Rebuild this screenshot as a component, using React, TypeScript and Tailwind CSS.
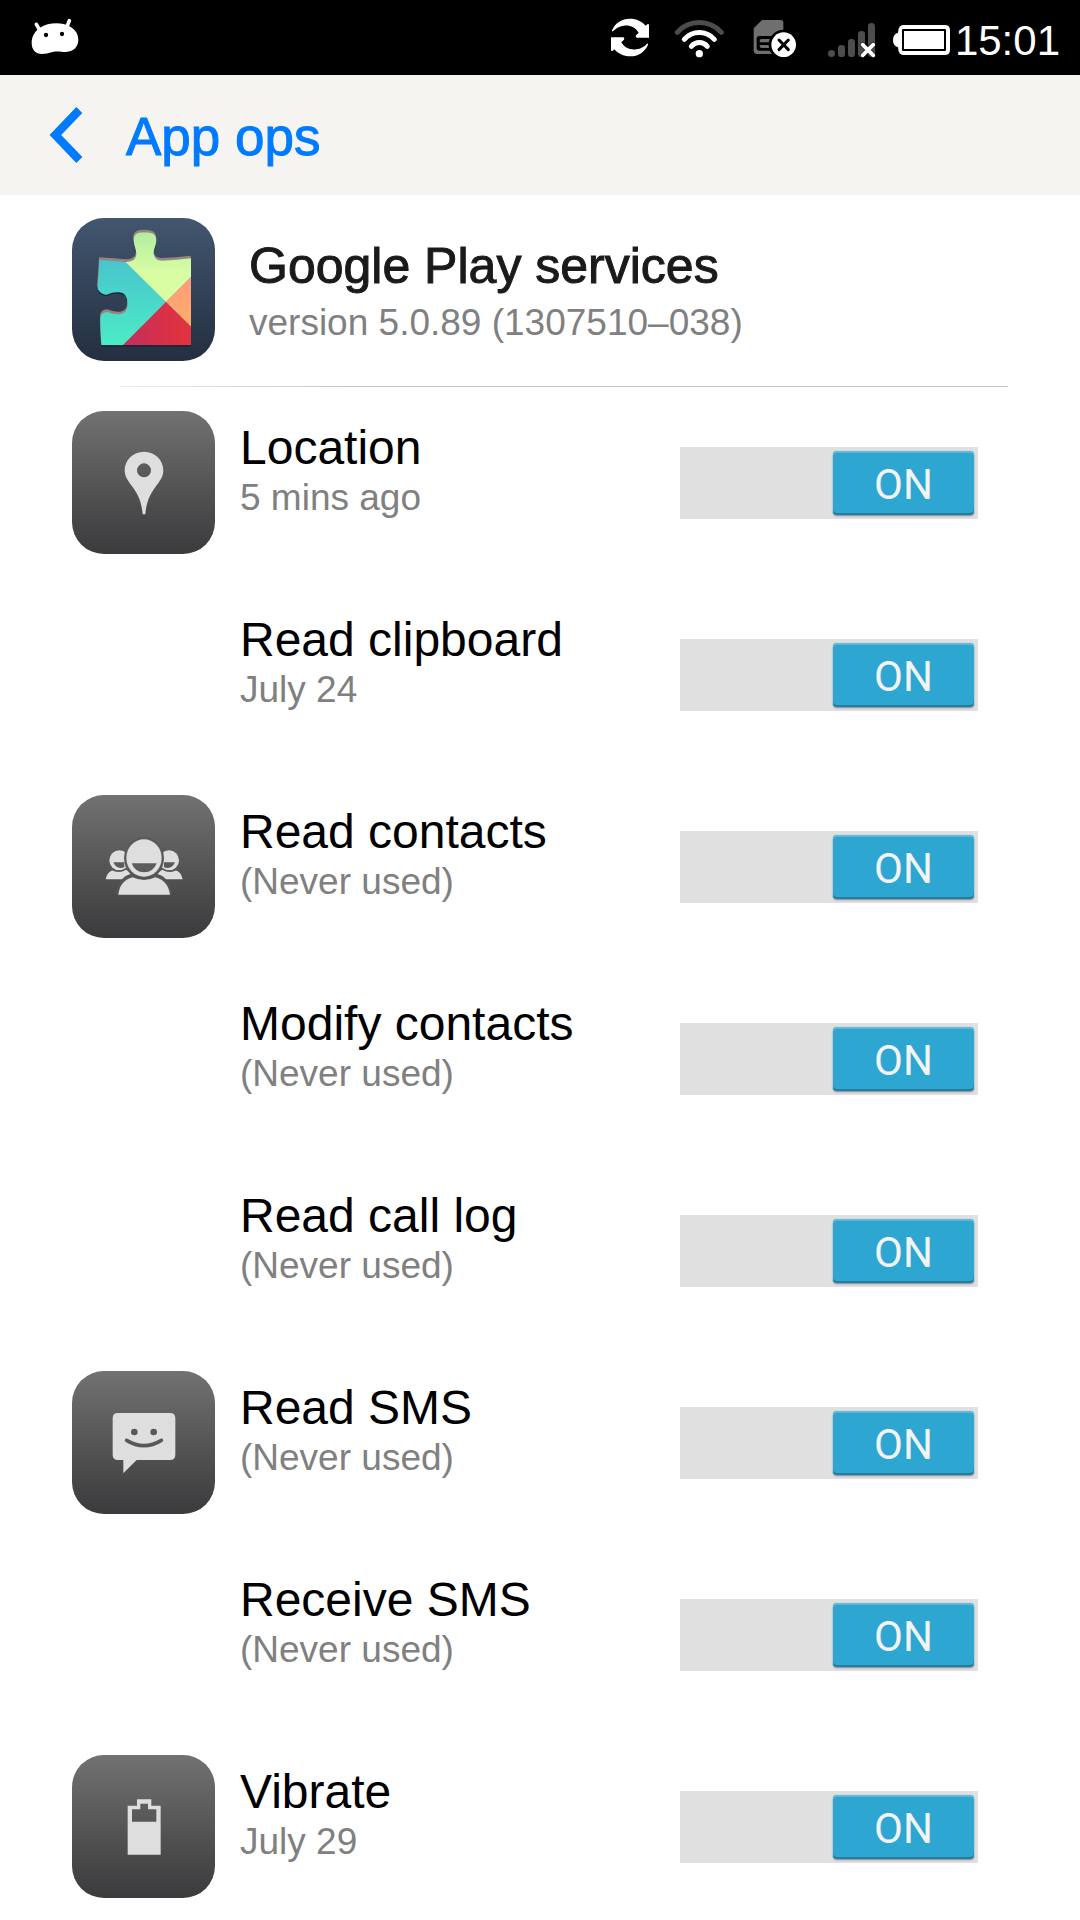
import { useState, type ReactNode } from "react";

function AndroidHead() {
  return (
    <svg viewBox="90 0 150 225" className="h-[75px] w-[50px]" aria-hidden="true">
      <g stroke="#fff" strokeWidth="11" strokeLinecap="round">
        <path d="M109 73 L118 88" />
        <path d="M208 62 L202 77" />
      </g>
      <path
        d="M95 128 C95 108 106 92 120 83 C145 66 188 66 208 79 C227 88 235 104 235 121 C234 143 219 155 198 156 C182 156 172 153 158 156 C145 160 136 162 126 162 C106 161 95 149 95 128 Z"
        fill="#fff"
      />
      <circle cx="138" cy="105" r="6.5" />
      <circle cx="186" cy="102" r="6.5" />
    </svg>
  );
}

function SyncIcon() {
  return (
    <svg viewBox="60 0 120 225" className="h-[75px] w-10" fill="#fff" aria-hidden="true">
      <path
        id="sync-arrow"
        d="M66 91 C76 68 96 56 119 56 C140 56 156 64 167 77 L173 72 Q177 71 177 76 L177 113 L140 113 Q135 110 138 106 L146 98 C136 81 118 74 101 77 C87 79 76 86 69 94 Q65 95 66 91 Z"
      />
      <use href="#sync-arrow" transform="rotate(180 120 112.5)" />
    </svg>
  );
}

function WifiIcon() {
  return (
    <svg viewBox="252 0 153 225" className="h-[75px] w-[51px]" fill="none" strokeWidth="15" strokeLinecap="round" aria-hidden="true">
      <path d="M262 97 C297 58 358 58 394 97" stroke="#4d4d4d" />
      <path d="M283 118 C307 91 348 91 373 118" stroke="#fff" />
      <path d="M304 139 C317 124 339 124 352 139" stroke="#fff" />
      <circle cx="328" cy="161" r="11" fill="#fff" />
    </svg>
  );
}

function SimIcon() {
  return (
    <svg viewBox="489 0 132 225" className="h-[75px] w-11" aria-hidden="true">
      <path d="M516 60 H572 Q580 60 580 68 V162 H502 Q491 162 491 151 V85 Z" fill="#6f6f6f" />
      <path d="M508 108 H560 V152 H508 Q500 152 500 144 V116 Q500 108 508 108 Z" fill="#000" />
      <path d="M515 117 H550 V127 H509 V123 Q509 117 515 117 Z M509 135 H550 V144 H515 Q509 144 509 138 Z" fill="#6f6f6f" />
      <circle cx="581" cy="134" r="45" fill="#000" />
      <circle cx="581" cy="134" r="37" fill="#fff" />
      <path d="M567 120 L595 149 M595 120 L567 149" stroke="#000" strokeWidth="9" strokeLinecap="round" />
    </svg>
  );
}

function SignalIcon() {
  return (
    <svg viewBox="51 0 147 225" className="h-[75px] w-[49px]" aria-hidden="true">
      <g fill="#4d4d4d">
        <rect x="54" y="150" width="21" height="21" rx="10.5" />
        <rect x="84" y="135" width="21" height="36" rx="10" />
        <rect x="114" y="117" width="21" height="54" rx="10" />
        <rect x="144" y="93" width="21" height="78" rx="10" />
        <path d="M174 79 Q174 69 184 69 Q195 69 195 79 V171 H184 Q174 171 174 160 Z" />
      </g>
      <path d="M158 134 L190 166 M190 134 L158 166" stroke="#000" strokeWidth="17" strokeLinecap="round" opacity="0.3" />
      <path d="M158 134 L190 166 M190 134 L158 166" stroke="#fff" strokeWidth="11" strokeLinecap="round" />
    </svg>
  );
}

function BatteryIcon() {
  return (
    <svg viewBox="246 0 177 225" className="h-[75px] w-[59px]" aria-hidden="true">
      <path
        d="M282 75 H404 Q420 75 420 91 V149 Q420 165 404 165 H282 Q267 165 265 149 L264 142 Q249 138 249 120 Q249 102 264 98 L265 91 Q267 75 282 75 Z"
        fill="#fff"
      />
      <rect x="276" y="87" width="132" height="66" rx="3" fill="#000" />
      <rect x="282" y="93" width="120" height="54" fill="#fff" />
    </svg>
  );
}

function PlayServicesIcon() {
  return (
    <svg viewBox="36 39 429 429" className="size-[143px] shrink-0" role="img" aria-label="Google Play services">
      <defs>
        <linearGradient id="tile-navy" x1="0" y1="0" x2="0" y2="1">
          <stop offset="0" stopColor="#42566f" />
          <stop offset="1" stopColor="#242f40" />
        </linearGradient>
        <linearGradient id="teal" x1="0" y1="0" x2="0" y2="1">
          <stop offset="0" stopColor="#48c4cc" />
          <stop offset="1" stopColor="#4cecc6" />
        </linearGradient>
        <linearGradient id="lime" x1="0" y1="0" x2="0" y2="1">
          <stop offset="0" stopColor="#aeeba2" />
          <stop offset="0.6" stopColor="#d9fda3" />
        </linearGradient>
        <linearGradient id="peach" x1="0" y1="0" x2="0" y2="1">
          <stop offset="0" stopColor="#ff9a7e" />
          <stop offset="1" stopColor="#ffae68" />
        </linearGradient>
        <linearGradient id="crimson" x1="0" y1="0" x2="1" y2="0">
          <stop offset="0" stopColor="#c02e60" />
          <stop offset="0.7" stopColor="#dc3144" />
          <stop offset="1" stopColor="#e2353b" />
        </linearGradient>
        <path
          id="puzzle"
          d="M118 165 Q165 168 198 171 Q229 170 229 148 C229 132 221 122 221 104 C221 86 234 82 254 82 C278 82 289 88 289 106 C289 122 281 130 281 146 Q283 166 306 167 Q350 166 393 160 V421 H124 Q121 370 121 340 Q123 321 143 321 Q160 329 180 328 Q203 325 203 298 Q203 263 177 262 Q160 260 140 269 Q126 271 113 253 Q112 240 115 220 Z"
        />
        <clipPath id="puzzle-clip">
          <use href="#puzzle" />
        </clipPath>
      </defs>
      <rect x="36" y="39" width="429" height="429" rx="96" fill="url(#tile-navy)" />
      <use href="#puzzle" fill="#1b2433" transform="translate(0 4)" />
      <use href="#puzzle" fill="#96857f" transform="translate(-1 -8)" />
      <g clipPath="url(#puzzle-clip)">
        <path d="M100 160 H190 L318 291 L186 425 H100 Z" fill="url(#teal)" />
        <path d="M184 158 L200 70 H400 V209 L318 291 Z" fill="url(#lime)" />
        <path d="M318 291 L400 209 V372 Z" fill="url(#peach)" />
        <path d="M318 291 L400 372 V425 H184 Z" fill="url(#crimson)" />
      </g>
    </svg>
  );
}

function Tile({ top, children }: { top: number; children: ReactNode }) {
  return (
    <svg
      viewBox={`36 ${top} 429 429`}
      className="size-[143px] rounded-[32px] bg-linear-to-b from-[#727272] to-[#3b3b3d]"
      fill="#dedede"
      aria-hidden="true"
    >
      {children}
    </svg>
  );
}

function LocationTile() {
  return (
    <Tile top={33}>
      <path
        fillRule="evenodd"
        d="M252 155 C285 155 310 180 310 211 C310 233 297 246 284 264 C266 289 259 312 256 343 H248 C245 312 238 289 220 264 C207 246 194 233 194 211 C194 180 219 155 252 155 Z M252 190 A21 21 0 1 0 252 232 A21 21 0 1 0 252 190 Z"
      />
    </Tile>
  );
}

function ContactsTile() {
  return (
    <Tile top={45}>
      <g id="side-person">
        <circle cx="178" cy="241" r="30" />
        <path d="M137 298 Q141 276 160 270 Q178 282 197 268 L215 282 Q203 289 197 298 Z" />
        <path d="M160 247 H193 V262 Q170 270 160 247 Z" fill="#5a5a5b" />
        <path d="M155 268 Q178 280 200 266" fill="none" stroke="#5a5a5b" strokeWidth="4" />
      </g>
      <use href="#side-person" transform="translate(505 0) scale(-1 1)" />
      <ellipse cx="252" cy="235" rx="60" ry="64" fill="#5a5a5b" />
      <path d="M168 344 Q176 290 212 282 H292 Q328 290 336 344 Z" fill="#555556" />
      <path d="M175 344 Q180 302 218 292 Q252 308 286 292 Q324 302 330 344 Z" />
      <ellipse cx="252" cy="234" rx="53" ry="56" />
      <path d="M215 250 H290 Q280 277 252 277 Q225 277 215 250 Z" fill="#5c5c5d" />
    </Tile>
  );
}

function MessageTile() {
  return (
    <Tile top={33}>
      <path d="M174 159 H330 Q346 159 346 175 V284 Q346 300 330 300 H230 L190 340 V300 H174 Q158 300 158 284 V175 Q158 159 174 159 Z" />
      <circle cx="223" cy="216" r="10" fill="#58585a" />
      <circle cx="281" cy="216" r="10" fill="#58585a" />
      <path d="M200 241 Q252 273 304 241" fill="none" stroke="#58585a" strokeWidth="11" strokeLinecap="round" />
    </Tile>
  );
}

function VibrateTile() {
  return (
    <Tile top={30}>
      <path fillRule="evenodd" d="M231 163 H274 V182 H302 V329 H203 V182 H231 Z M241 176 V193 H216 V230 H289 V193 H264 V176 Z" />
    </Tile>
  );
}

function Toggle({ label }: { label: string }) {
  const [on, setOn] = useState(true);
  return (
    <button
      type="button"
      role="switch"
      aria-checked={on}
      aria-label={label}
      onClick={() => setOn(!on)}
      className={`flex h-[72px] w-[298px] shrink-0 items-center bg-[#e0e0e0] px-1 ${on ? "justify-end" : "justify-start"}`}
    >
      <span
        className={`flex h-16 w-[141px] items-center justify-center rounded-[4px] pt-1 font-[Roboto,sans-serif] text-[42px] leading-none text-[#f3f3f3] ${
          on
            ? "bg-[#2ea6d2] shadow-[inset_0_2px_0_#5bbbdc,inset_0_-2px_0_#2080a4,0_1px_2px_#00000066]"
            : "bg-[#a8a8a8]"
        }`}
      >
        {on ? "ON" : "OFF"}
      </span>
    </button>
  );
}

const ops: { name: string; detail: string; icon?: ReactNode }[] = [
  { name: "Location", detail: "5 mins ago", icon: <LocationTile /> },
  { name: "Read clipboard", detail: "July 24" },
  { name: "Read contacts", detail: "(Never used)", icon: <ContactsTile /> },
  { name: "Modify contacts", detail: "(Never used)" },
  { name: "Read call log", detail: "(Never used)" },
  { name: "Read SMS", detail: "(Never used)", icon: <MessageTile /> },
  { name: "Receive SMS", detail: "(Never used)" },
  { name: "Vibrate", detail: "July 29", icon: <VibrateTile /> },
];

export default function App() {
  return (
    <div className="min-h-screen bg-white font-['Liberation_Sans',Arial,sans-serif] text-black">
      <div className="flex h-[75px] items-center bg-black pr-5 pl-[30px] text-white">
        <AndroidHead />
        <div className="ml-auto flex items-center">
          <div className="mr-[30px] flex items-center">
            <SyncIcon />
            <div className="mr-7 ml-6">
              <WifiIcon />
            </div>
            <SimIcon />
          </div>
          <div className="mr-1 flex items-center gap-4">
            <SignalIcon />
            <BatteryIcon />
          </div>
          <time className="pt-[6px] text-[42px] leading-none">15:01</time>
        </div>
      </div>

      <header className="flex h-[120px] items-center bg-[#f6f4f0] pl-12 text-[#007aff]">
        <button type="button" aria-label="Back" className="mr-[43px]">
          <svg viewBox="144 320 105 174" className="h-[58px] w-[35px]" aria-hidden="true">
            <path d="M238 332 L166 407 L238 482" fill="none" stroke="#007aff" strokeWidth="25" strokeLinejoin="miter" />
          </svg>
        </button>
        <h1 className="pt-1 text-[53px] leading-[60px] [-webkit-text-stroke:1px_#007aff]">App ops</h1>
      </header>

      <main>
        <section className="flex items-center px-[72px] pt-[23px] pb-[25px]">
          <PlayServicesIcon />
          <div className="ml-[34px] pt-[6px]">
            <h2 className="text-[50px] leading-[60px] text-[#1a1a1a] [-webkit-text-stroke:1px_#1a1a1a]">
              Google Play services
            </h2>
            <p className="text-[37px] leading-[54px] text-[#808080]">version 5.0.89 (1307510–038)</p>
          </div>
        </section>
        <div className="mr-[72px] ml-[120px] h-px bg-linear-to-r from-[#ececec] to-[#c8c8c8] to-25%" />

        <ul>
          {ops.map((op) => (
            <li key={op.name} className="flex items-center pt-6 pr-[102px] pb-[25px] pl-[72px] last:pb-5">
              <div className="size-[143px] shrink-0">{op.icon}</div>
              <div className="ml-[25px] min-w-0 flex-1 pb-6">
                <h3 className="text-[48px] leading-[54px]">{op.name}</h3>
                <p className="text-[37px] leading-[46px] text-[#808080]">{op.detail}</p>
              </div>
              <Toggle label={op.name} />
            </li>
          ))}
        </ul>
      </main>
    </div>
  );
}
